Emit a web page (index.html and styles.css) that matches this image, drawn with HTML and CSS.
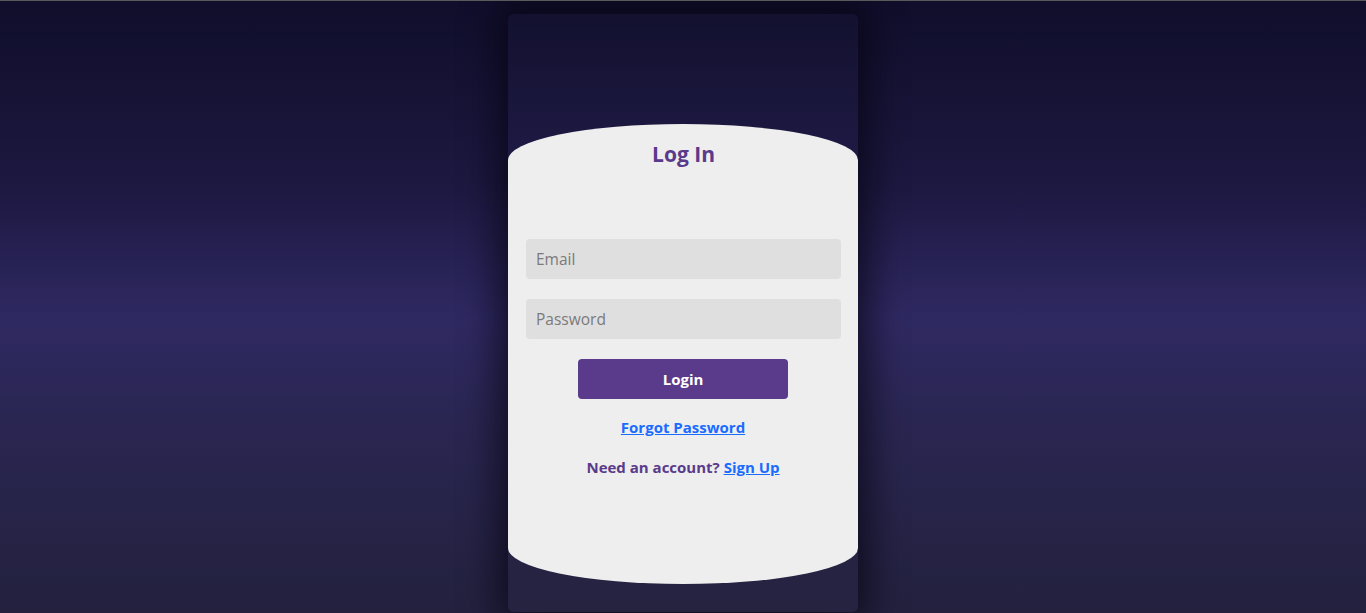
FILE: index.html
```html
<!DOCTYPE html>
<html lang="en">
<head>
<meta charset="utf-8">
<title>Log In</title>
<link rel="stylesheet" href="styles.css">
</head>
<body>
<div class="page">
  <div class="card">
    <form class="panel">
      <h1 class="title">Log In</h1>
      <input class="field" type="email" placeholder="Email">
      <input class="field" type="password" placeholder="Password" autofocus>
      <button class="btn" type="button">Login</button>
      <a class="link forgot" href="#">Forgot Password</a>
      <p class="signup">Need an account? <a class="link" href="#">Sign Up</a></p>
    </form>
  </div>
</div>
</body>
</html>
```

FILE: styles.css
```css
* { box-sizing: border-box; }
html, body { height: 100%; }
body {
  margin: 0;
  font-family: "Open Sans", "Noto Sans", sans-serif;
  background: linear-gradient(180deg, #100e2b 0%, #1c1840 30%, #2f2962 52%, #2a2652 68%, #23213e 100%);
  border-top: 1px solid #5a5a5a;
  overflow: hidden;
}
.page {
  display: flex;
  justify-content: center;
  padding-top: 13px;
}
.card {
  width: 350px;
  height: 598px;
  border-radius: 6px;
  background: linear-gradient(180deg, #13112f 0%, #1e1a45 25%, #2a2550 50%, #252340 100%);
  box-shadow: 0 0 36px 10px rgba(5, 4, 15, 0.7);
  padding-top: 110px;
}
.panel {
  height: 460px;
  background: #eeeeee;
  border-radius: 50% / 36px;
  padding: 16px 17px 0 18px;
  display: flex;
  flex-direction: column;
  align-items: center;
}
.title {
  margin: 0;
  font-size: 21px;
  line-height: 28px;
  font-weight: 700;
  color: #5a3a8a;
}
.field {
  width: 100%;
  height: 40px;
  border: none;
  border-radius: 4px;
  background: #e0dfdf;
  padding: 0 10px;
  font-family: inherit;
  font-size: 15.5px;
  color: #333;
  caret-color: #000;
  outline: none;
}
.field::placeholder { color: #7a7a7a; }
.field:first-of-type { margin-top: 71px; }
.field + .field { margin-top: 20px; }
.btn {
  margin: 20px 1px 0 0;
  width: 210px;
  height: 40px;
  border: none;
  border-radius: 4px;
  background: #5a3a8a;
  color: #ffffff;
  font-family: inherit;
  font-size: 15px;
  font-weight: 700;
}
.link {
  color: #1a6cff;
  font-weight: 700;
  text-decoration: underline;
}
.forgot {
  margin: 18px 1px 0 0;
  font-size: 15px;
  line-height: 20px;
}
.signup {
  margin: 20px 1px 0 0;
  font-size: 15px;
  line-height: 20px;
  font-weight: 700;
  color: #5a3a8a;
}
```
